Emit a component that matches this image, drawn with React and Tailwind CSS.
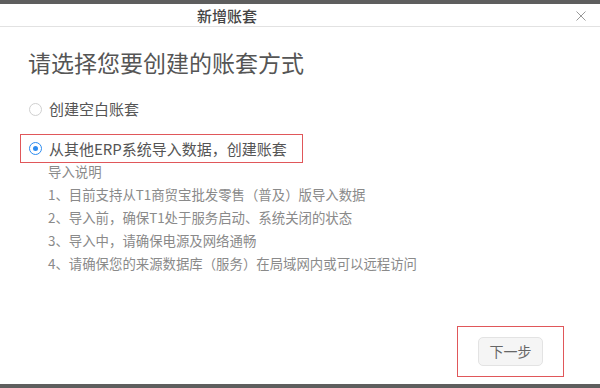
const font = { fontFamily: '"Noto Sans CJK SC", "Noto Sans", sans-serif' };

const notes = [
  '1、目前支持从T1商贸宝批发零售（普及）版导入数据',
  '2、导入前，确保T1处于服务启动、系统关闭的状态',
  '3、导入中，请确保电源及网络通畅',
  '4、请确保您的来源数据库（服务）在局域网内或可以远程访问',
];

function Radio({ checked }) {
  return (
    <span
      className={`flex h-[13px] w-[13px] shrink-0 items-center justify-center rounded-full border ${
        checked ? 'border-[#2d8cf0]' : 'border-[#d0d0d0]'
      }`}
    >
      {checked && <span className="h-[5px] w-[5px] rounded-full bg-[#2d8cf0]" />}
    </span>
  );
}

export default function App() {
  return (
    <div className="flex h-[388px] w-[600px] flex-col overflow-hidden bg-white" style={font}>
      <div className="h-[4px] bg-[#5e5e5e]" />
      <div className="relative flex h-[23px] items-center border-b border-[#e2e2e2] pl-[197px]">
        <span className="text-[15px] font-medium leading-none text-[#444]">新增账套</span>
        <svg className="absolute right-[14px] top-[7px]" width="10" height="10" viewBox="0 0 10 10">
          <path d="M0.5 0.5 L9.5 9.5 M9.5 0.5 L0.5 9.5" stroke="#999" strokeWidth="1" />
        </svg>
      </div>

      <div className="flex flex-1 flex-col">
        <h1 className="ml-[28px] mt-[20px] text-[23px] font-normal leading-[30px] text-[#555]">
          请选择您要创建的账套方式
        </h1>

        <div className="ml-[29px] mt-[22px] flex items-center gap-[7px]">
          <Radio />
          <span className="text-[15px] leading-[20px] text-[#555]">创建空白账套</span>
        </div>

        <div className="ml-[20px] mt-[15px] flex h-[29px] w-[283px] items-center gap-[7px] border border-[#e0575a] pl-[8px]">
          <Radio checked />
          <span className="text-[15px] leading-[20px] text-[#555]">从其他ERP系统导入数据，创建账套</span>
        </div>

        <div className="ml-[48px] flex flex-col text-[13.4px] leading-[23px] text-[#8a8a8a]">
          <span className="-mt-[3px]">导入说明</span>
          {notes.map((n) => (
            <span key={n}>{n}</span>
          ))}
        </div>

        <div className="mb-[7px] mr-[36px] mt-auto flex justify-end">
          <div className="flex h-[51px] w-[107px] items-center justify-center border border-[#e0575a]">
            <button className="flex h-[29px] w-[65px] items-center justify-center rounded-[5px] border border-[#e3e3e3] bg-[#f5f5f5] text-[14px] text-[#666]">
              下一步
            </button>
          </div>
        </div>
      </div>
      <div className="h-[4px] bg-[#5e5e5e]" />
    </div>
  );
}
